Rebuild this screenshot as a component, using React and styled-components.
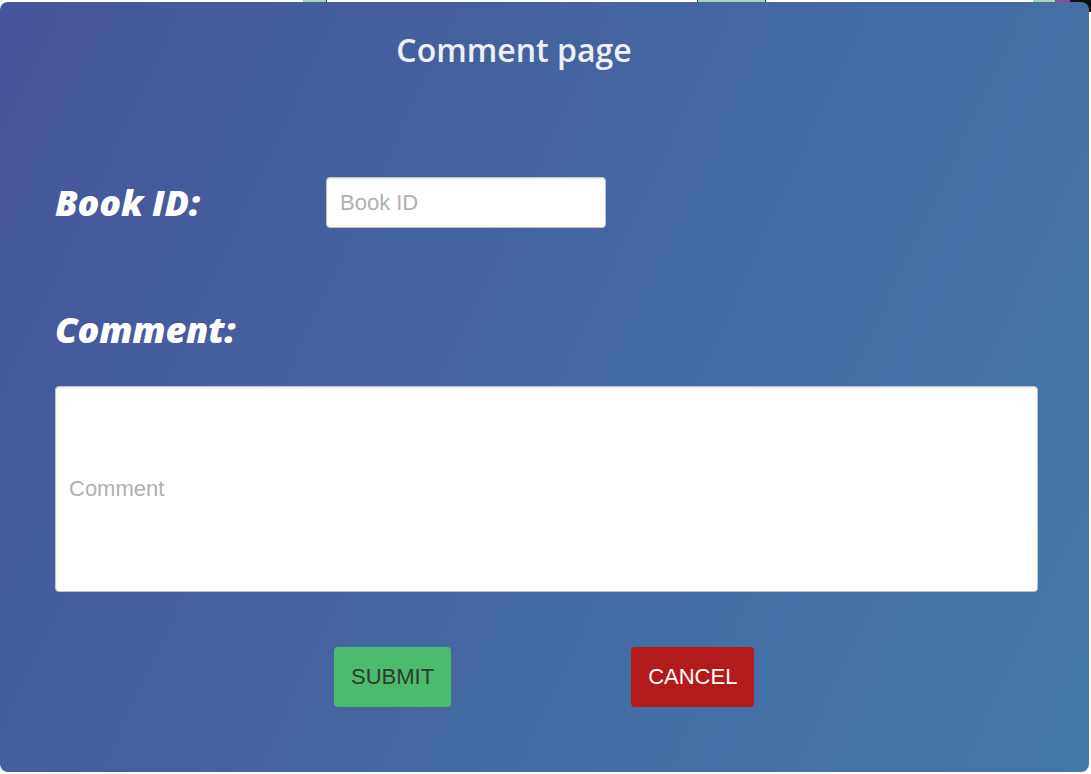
import styled, { createGlobalStyle } from "styled-components";

const GlobalStyle = createGlobalStyle`
  html, body {
    margin: 0;
    padding: 0;
    background: #ffffff;
    overflow: hidden;
  }
`;

const Page = styled.div`
  position: relative;
  width: 1091px;
  height: 774px;
  background: #ffffff;
`;

const TopBar = styled.div`
  display: flex;
  height: 12px;
  padding-left: 303px;
`;

const Cell = styled.div`
  width: ${(p) => p.$w}px;
  background: ${(p) => p.$bg};
  border-left: ${(p) => (p.$line ? "1px solid #333" : "none")};
`;

const Modal = styled.div`
  position: absolute;
  top: 2px;
  left: 0;
  width: 1089px;
  height: 770px;
  box-sizing: border-box;
  border-radius: 8px;
  background: linear-gradient(115deg, #46549a 0%, #4367a2 50%, #4279a9 100%);
  padding: 30px 53px 0 55px;
  display: flex;
  flex-direction: column;
`;

const Title = styled.h2`
  margin: 0 0 0 -55px;
  padding-right: 8px;
  text-align: center;
  font-family: "Open Sans", "Noto Sans", sans-serif;
  font-weight: 600;
  font-size: 32px;
  line-height: 36px;
  color: #eef0f6;
`;

const Row = styled.div`
  display: flex;
  align-items: center;
  margin-top: ${(p) => p.$top}px;
`;

const Label = styled.label`
  width: ${(p) => p.$w || "auto"};
  font-family: "Open Sans", "Noto Sans", sans-serif;
  font-weight: 800;
  font-style: italic;
  font-size: 36px;
  line-height: 44px;
  color: #ffffff;
  letter-spacing: -0.2px;
`;

const Field = styled.input`
  box-sizing: border-box;
  width: ${(p) => p.$w};
  height: ${(p) => p.$h}px;
  margin-top: ${(p) => p.$top || 0}px;
  padding: 0 13px;
  border: 1px solid #c4c4c4;
  border-radius: 4px;
  background: #ffffff;
  box-shadow: inset 0 1px 2px rgba(0, 0, 0, 0.1);
  font-family: "Liberation Sans", Arial, sans-serif;
  font-size: 22px;
  color: #333;
  outline: none;
  &::placeholder {
    color: #b0b0b0;
  }
`;

const Buttons = styled.div`
  display: flex;
  gap: 180px;
  margin-top: 55px;
  padding-left: 279px;
`;

const Button = styled.button`
  height: 60px;
  padding: 0 17px;
  border: none;
  border-radius: 4px;
  font-family: "Liberation Sans", Arial, sans-serif;
  font-size: 22px;
  background: ${(p) => (p.$danger ? "#b31b1b" : "#4cbb6e")};
  color: ${(p) => (p.$danger ? "#ffffff" : "#2f3a33")};
  cursor: pointer;
`;

export default function App() {
  return (
    <>
      <GlobalStyle />
      <Page>
        <TopBar>
          <Cell $w={23} $bg="#a6d4bd" />
          <Cell $w={371} $bg="#ffffff" $line />
          <Cell $w={68} $bg="#a6d4bd" $line />
          <Cell $w={268} $bg="#ffffff" $line />
          <Cell $w={22} $bg="#a6d4bd" />
          <Cell $w={15} $bg="#8c4c9c" />
          <Cell $w={21} $bg="#111111" />
        </TopBar>
        <Modal>
          <Title>Comment page</Title>
          <Row $top={109}>
            <Label $w="271px">Book ID:</Label>
            <Field $w="280px" $h={51} placeholder="Book ID" />
          </Row>
          <Row $top={80}>
            <Label>Comment:</Label>
          </Row>
          <Field $w="983px" $h={206} $top={34} placeholder="Comment" />
          <Buttons>
            <Button>SUBMIT</Button>
            <Button $danger>CANCEL</Button>
          </Buttons>
        </Modal>
      </Page>
    </>
  );
}
